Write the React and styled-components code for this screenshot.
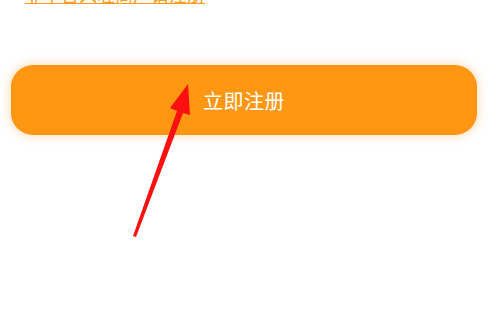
import React from "react";
import styled, { createGlobalStyle } from "styled-components";

const GlobalStyle = createGlobalStyle`
  html, body {
    margin: 0;
    padding: 0;
    background: #ffffff;
    font-family: "Noto Sans CJK SC", "Noto Sans", sans-serif;
  }
`;

const Page = styled.div`
  position: relative;
  width: 500px;
  height: 310px;
  overflow: hidden;
  background: #ffffff;
`;

const Notice = styled.div`
  margin: -17px 0 0 25px;
  height: 22px;
  font-size: 18px;
  line-height: 22px;
  color: #ff9a14;
  text-decoration: underline;
  text-underline-offset: 1px;
  white-space: nowrap;
`;

const RegisterButton = styled.button`
  display: flex;
  align-items: center;
  justify-content: center;
  margin: 60px 0 0 11px;
  width: 466px;
  height: 70px;
  border: none;
  border-radius: 22px;
  background: #ff9712;
  box-shadow: 0 0 8px 2px rgba(255, 170, 90, 0.35);
  color: #ffffff;
  font-family: "Noto Sans CJK SC", "Noto Sans", sans-serif;
  font-size: 20px;
  font-weight: 400;
  letter-spacing: 0.5px;
  padding: 0;
  cursor: pointer;
`;

const Arrow = styled.svg`
  position: absolute;
  left: 0;
  top: 0;
  pointer-events: none;
`;

const App = () => (
  <Page>
    <GlobalStyle />
    <Notice>非平台入驻商户请注册</Notice>
    <RegisterButton>立即注册</RegisterButton>
    <Arrow width="500" height="310" viewBox="0 0 500 310">
      <path
        d="M133 236 L177 111 L170 108 L188 84 L190 115 L183 113 L136 237 Z"
        fill="#ff1010"
      />
    </Arrow>
  </Page>
);

export default App;
